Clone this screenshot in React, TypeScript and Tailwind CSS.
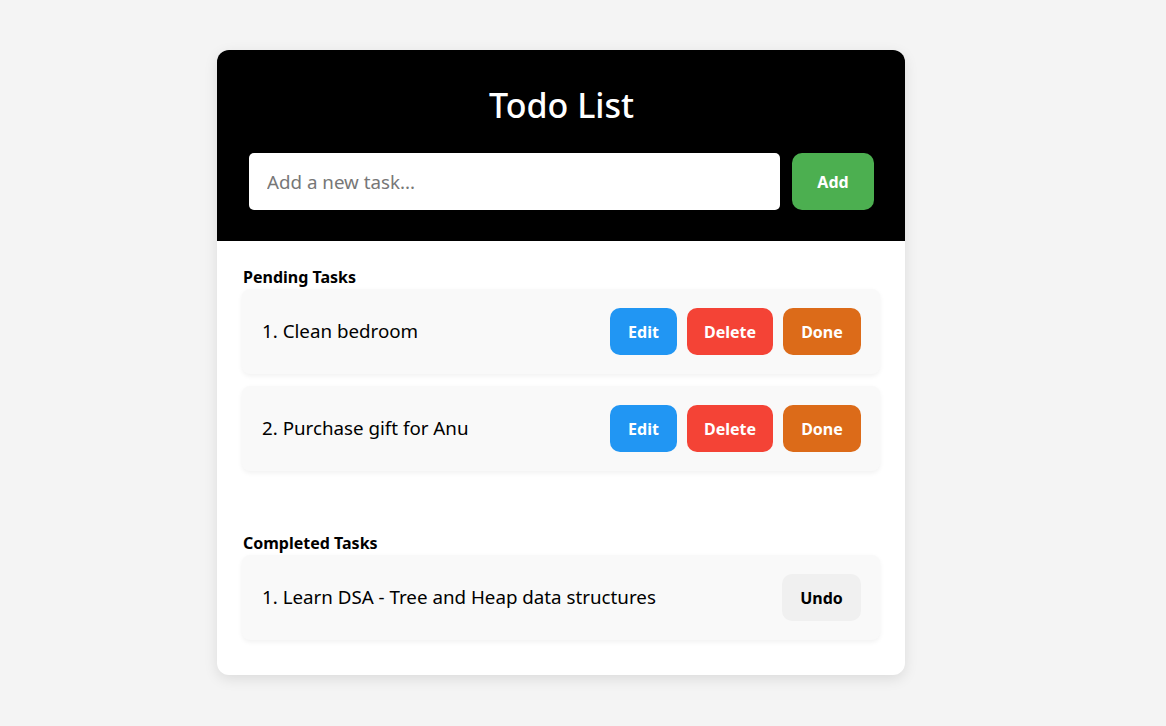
import { useState } from 'react';

type Task = { id: number; text: string };

export default function App() {
  const [input, setInput] = useState('');
  const [pending] = useState<Task[]>([
    { id: 1, text: 'Clean bedroom' },
    { id: 2, text: 'Purchase gift for Anu' },
  ]);
  const [completed] = useState<Task[]>([
    { id: 3, text: 'Learn DSA - Tree and Heap data structures' },
  ]);

  const btn = 'h-[47px] rounded-[10px] text-base font-bold';

  return (
    <div className="min-h-screen bg-[#f4f4f4] flex justify-center pt-[50px] pr-[44px] font-['Noto_Sans',sans-serif]">
      <div className="w-[688px] h-[625px] bg-white rounded-[12px] overflow-hidden shadow-[0_4px_14px_rgba(0,0,0,0.1)]">
        <div className="bg-black pl-8 pr-[31px] pt-[34px] pb-[31px]">
          <h1 className="text-white text-[34px] leading-[43px] font-medium text-center mb-[26px]">
            Todo List
          </h1>
          <div className="flex gap-3">
            <input
              type="text"
              placeholder="Add a new task..."
              value={input}
              onChange={(e) => setInput(e.target.value)}
              className="flex-1 h-[57px] rounded-[5px] bg-white px-[18px] text-[18.75px] placeholder:text-[#777] outline-none"
            />
            <button className="w-[82px] h-[57px] rounded-[10px] bg-[#4caf50] text-white font-bold text-base">
              Add
            </button>
          </div>
        </div>

        <div className="px-[25px] pt-6">
          <h2 className="text-base leading-6 font-bold text-black pl-px">Pending Tasks</h2>
          <div className="flex flex-col gap-3">
            {pending.map((t, i) => (
              <div
                key={t.id}
                className="flex items-center justify-between bg-[#f9f9f9] rounded-[8px] pl-5 pr-[19px] py-[19px] shadow-[0_2px_5px_rgba(0,0,0,0.06)]"
              >
                <span className="text-[18.75px] text-black">
                  {i + 1}. {t.text}
                </span>
                <div className="flex gap-[10px]">
                  <button className={`${btn} w-[67px] bg-[#2196f3] text-white`}>Edit</button>
                  <button className={`${btn} w-[86px] bg-[#f44336] text-white`}>Delete</button>
                  <button className={`${btn} w-[78px] bg-[#dc6b19] text-white`}>Done</button>
                </div>
              </div>
            ))}
          </div>

          <h2 className="text-base leading-6 font-bold text-black pl-px mt-[60px]">Completed Tasks</h2>
          <div className="flex flex-col gap-3">
            {completed.map((t, i) => (
              <div
                key={t.id}
                className="flex items-center justify-between bg-[#f9f9f9] rounded-[8px] pl-5 pr-[19px] py-[19px] shadow-[0_2px_5px_rgba(0,0,0,0.06)]"
              >
                <span className="text-[18.75px] text-black">
                  {i + 1}. {t.text}
                </span>
                <button className={`${btn} w-[79px] bg-[#f0f0f0] text-black`}>Undo</button>
              </div>
            ))}
          </div>
        </div>
      </div>
    </div>
  );
}
